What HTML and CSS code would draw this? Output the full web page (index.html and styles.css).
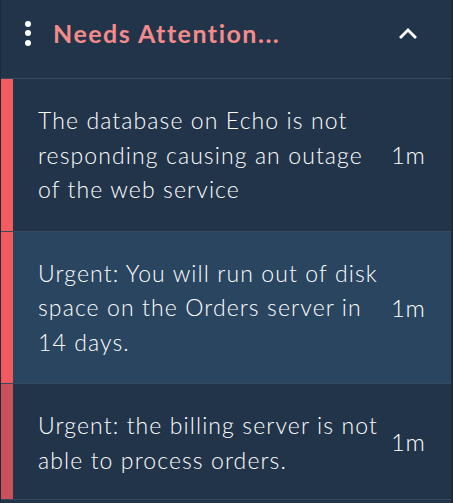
FILE: index.html
```html
<!DOCTYPE html>
<html>
<head>
<meta charset="utf-8">
<link rel="stylesheet" href="styles.css">
</head>
<body>
<div class="panel">
  <div class="header">
    <div class="kebab"><span></span><span></span><span></span></div>
    <div class="title">Needs Attention...</div>
    <svg class="chev" width="20" height="14" viewBox="0 0 20 14"><path d="M3 11 L10 4 L17 11" fill="none" stroke="#fff" stroke-width="2.8" stroke-linecap="square"/></svg>
  </div>
  <div class="item">
    <div class="bar red1"></div>
    <div class="text">The database on Echo is not responding causing an outage of the web service</div>
    <div class="time">1m</div>
  </div>
  <div class="item alt">
    <div class="bar red2"></div>
    <div class="text">Urgent: You will run out of disk space on the Orders server in 14 days.</div>
    <div class="time">1m</div>
  </div>
  <div class="item last">
    <div class="bar red3"></div>
    <div class="text">Urgent: the billing server is not able to process orders.</div>
    <div class="time">1m</div>
  </div>
</div>
</body>
</html>
```
FILE: styles.css
```css
* { box-sizing: border-box; }
html, body { margin: 0; padding: 0; background: #22344a; }
body { font-family: Lato, "Open Sans", sans-serif; }
.panel {
  width: 453px;
  height: 503px;
  background: #22344a;
  border-left: 1px solid #1a2a3c;
  border-right: 2px solid #1a2a3c;
  display: flex;
  flex-direction: column;
}
.header {
  height: 79px;
  display: flex;
  align-items: center;
  padding: 0 0 12px 22px;
  border-bottom: 1px solid #364a60;
}
.kebab { display: flex; flex-direction: column; gap: 3.5px; width: 10px; align-items: center; }
.kebab span { width: 6px; height: 6px; border-radius: 50%; background: #fff; }
.title {
  margin-left: 20px;
  color: #f48b8b;
  font-size: 25px;
  font-weight: 700;
  letter-spacing: 1.5px;
  flex: 1;
}
.chev { margin-right: 33px; margin-top: -1px; }
.item {
  display: flex;
  align-items: stretch;
  border-bottom: 1px solid #364a60;
  background: #22344a;
}
.item.alt { background: #2a4560; }
.item.last { height: 116px; }
.bar { width: 12px; flex: none; }
.red1 { background: #f45b5f; }
.red2 { background: #f25a5f; }
.red3 { background: #c9515c; }
.text {
  flex: none;
  width: 370px;
  color: #fff;
  font-size: 23px;
  font-weight: 300;
  line-height: 34.5px;
  padding: 24px 0 24px 25px;
  letter-spacing: 1.1px;
}
.time {
  color: #fff;
  font-size: 24px;
  font-weight: 300;
  letter-spacing: 0.5px;
  display: flex;
  align-items: center;
  margin-left: 8px;
}
```
